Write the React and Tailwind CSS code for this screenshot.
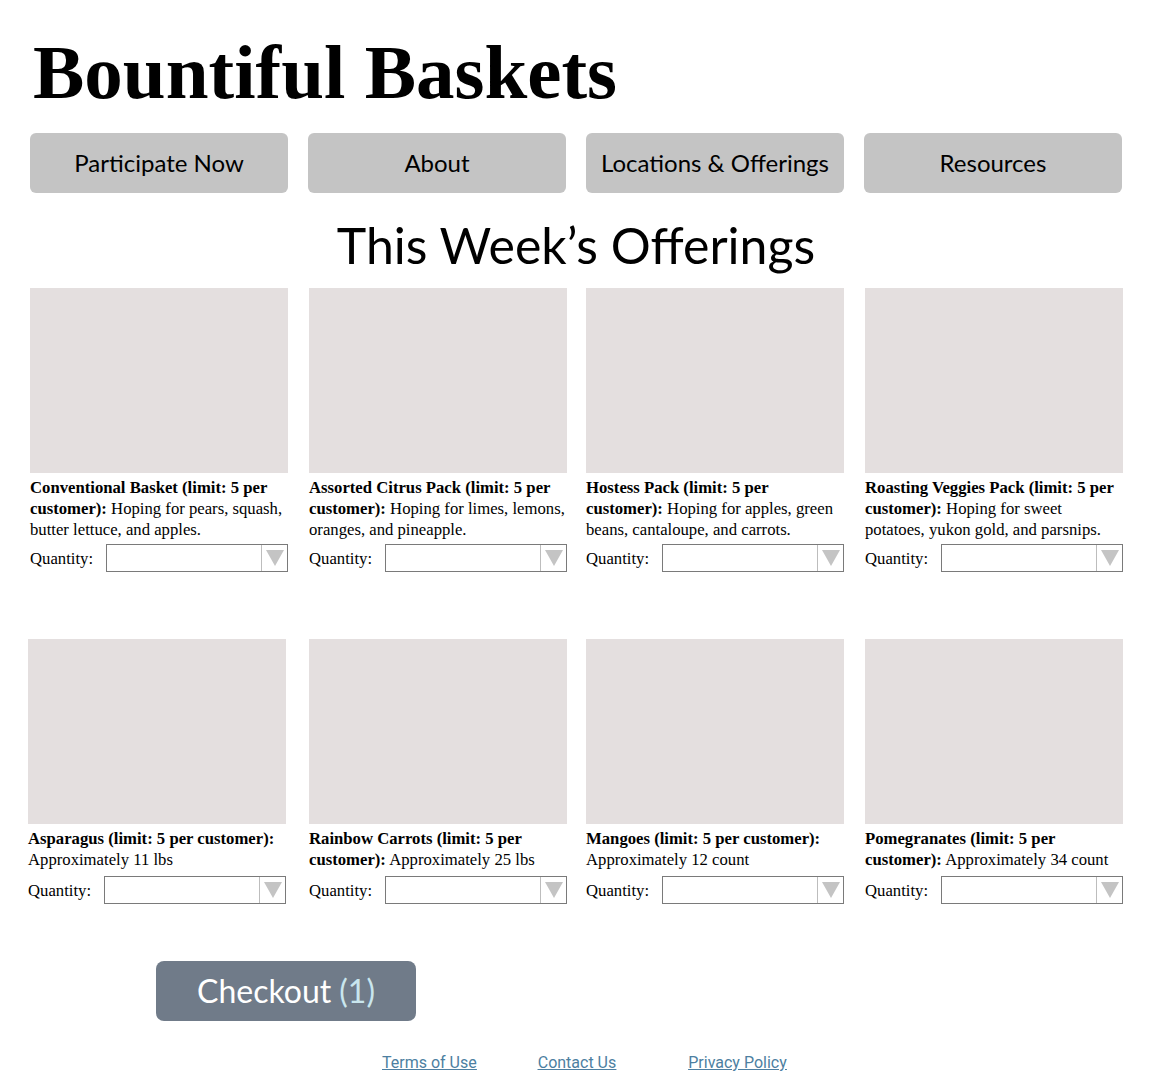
import React from "react";

const navItems = ["Participate Now", "About", "Locations & Offerings", "Resources"];

const row1 = [
  { title: "Conventional Basket (limit: 5 per customer):", desc: "Hoping for pears, squash, butter lettuce, and apples." },
  { title: "Assorted Citrus Pack (limit: 5 per customer):", desc: "Hoping for limes, lemons, oranges, and pineapple." },
  { title: "Hostess Pack (limit: 5 per customer):", desc: "Hoping for apples, green beans, cantaloupe, and carrots." },
  { title: "Roasting Veggies Pack (limit: 5 per customer):", desc: "Hoping for sweet potatoes, yukon gold, and parsnips." },
];

const row2 = [
  { title: "Asparagus (limit: 5 per customer):", desc: "Approximately 11 lbs" },
  { title: "Rainbow Carrots (limit: 5 per customer):", desc: "Approximately 25 lbs" },
  { title: "Mangoes (limit: 5 per customer):", desc: "Approximately 12 count" },
  { title: "Pomegranates (limit: 5 per customer):", desc: "Approximately 34 count" },
];

function Select() {
  return (
    <div className="flex-1 h-[28px] border border-[#7a7a7a] flex bg-white">
      <div className="flex-1" />
      <div className="w-[26px] border-l border-[#bdbdbd] flex items-center justify-center">
        <svg width="20" height="18" viewBox="0 0 20 18">
          <polygon points="1,1 19,1 10,17" fill="#c4c4c4" />
        </svg>
      </div>
    </div>
  );
}

const shifts = ["", "ml-[1px] -mr-[1px]", "", "ml-[1px] -mr-[1px]"];

function Card({ item, cls, gap }) {
  return (
    <div className={cls}>
      <div className="h-[185px] bg-[#e4dfdf]" />
      <p className="mt-[4px] text-[16.7px] leading-[21px] text-black">
        <span className="font-bold">{item.title}</span> {item.desc}
      </p>
      <div className={`${gap} flex items-center gap-[13px]`}>
        <span className="text-[16.7px] leading-[21px]">Quantity:</span>
        <Select />
      </div>
    </div>
  );
}

export default function App() {
  return (
    <div className="w-[1152px] min-h-[1078px] bg-white text-black">
      <h1
        className="pl-[33px] pt-[34px] text-[77px] leading-[77px] font-bold"
        style={{ fontFamily: '"Liberation Serif", serif' }}
      >
        Bountiful Baskets
      </h1>

      <nav className="mt-[22px] px-[30px] grid grid-cols-4 gap-x-[20px]" style={{ fontFamily: 'Lato, sans-serif' }}>
        {navItems.map((n) => (
          <div key={n} className="h-[60px] rounded-[6px] bg-[#c4c4c4] flex items-center justify-center text-[24px] text-black">
            {n}
          </div>
        ))}
      </nav>

      <h2 className="mt-[20px] text-center text-[50px] leading-[64px]" style={{ fontFamily: 'Lato, sans-serif' }}>
        This Week’s Offerings
      </h2>

      <div style={{ fontFamily: '"Liberation Serif", serif' }}>
        <div className="mt-[11px] px-[30px] grid grid-cols-4 gap-x-[20px]">
          {row1.map((it, i) => (
            <Card key={it.title} item={it} cls={shifts[i]} gap="mt-[4px]" />
          ))}
        </div>
        <div className="mt-[67px] px-[30px] grid grid-cols-4 gap-x-[20px]">
          {row2.map((it, i) => (
            <Card key={it.title} item={it} cls={i === 0 ? "-ml-[2px] mr-[2px]" : shifts[i]} gap="mt-[6px]" />
          ))}
        </div>
      </div>

      <div className="mt-[57px] pl-[156px]">
        <button
          className="w-[260px] h-[60px] rounded-[8px] bg-[#707b89] text-[32px] text-white flex items-center justify-center"
          style={{ fontFamily: 'Lato, sans-serif' }}
        >
          Checkout <span className="ml-[8px] text-[#c9e6ee]">(1)</span>
        </button>
      </div>

      <div className="mt-[30px] flex pl-[382px] text-[16px] text-[#4d7fa1] underline" style={{ fontFamily: 'Roboto, sans-serif' }}>
        <a href="#" className="mr-[61px]">Terms of Use</a>
        <a href="#" className="mr-[72px]">Contact Us</a>
        <a href="#">Privacy Policy</a>
      </div>
    </div>
  );
}
